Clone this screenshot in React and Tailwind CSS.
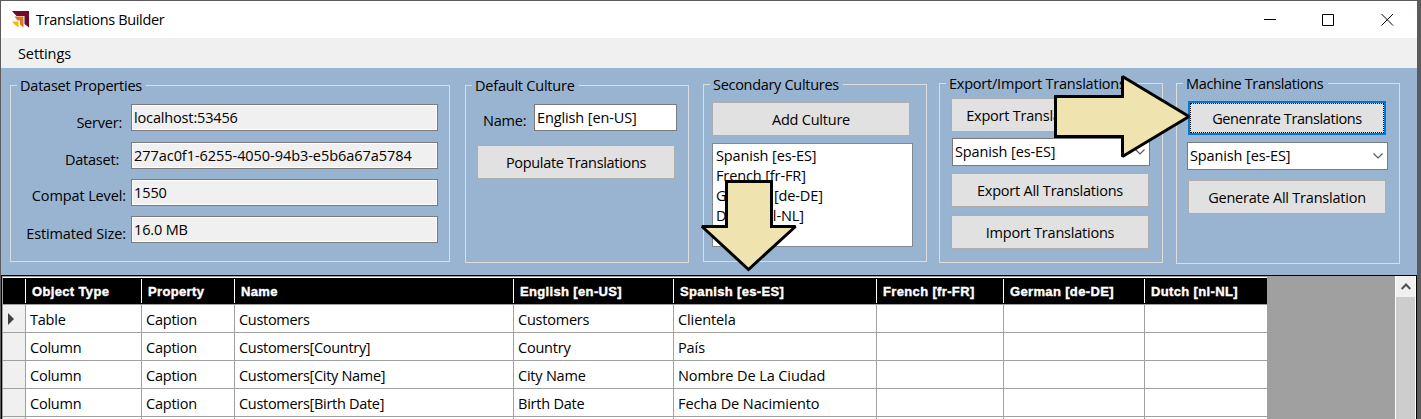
import React from 'react';

function Group({ title, box, gap, children }) {
  return (
    <section className={`relative shrink-0 border border-[#dcdcdc] ${box}`}>
      <h2 className={`absolute left-[6px] -top-[12px] h-[24px] bg-[#99b4d1] pl-[3px] leading-[24px] whitespace-nowrap ${gap}`}>{title}</h2>
      {children}
    </section>
  );
}

function Btn({ children, className = '' }) {
  return (
    <button className={`block h-[34px] w-[198px] shrink-0 border border-[#adadad] bg-[#e1e1e1] text-center leading-[33px] whitespace-nowrap ${className}`}>
      {children}
    </button>
  );
}

function Field({ label, value, pad, tracking = '' }) {
  return (
    <div className="flex h-[27px]">
      <label className={`w-[120px] shrink-0 text-right leading-[24px] whitespace-nowrap ${pad}`}>{label}</label>
      <div className={`w-[307px] border border-[#7a7a7a] bg-[#f0f0f0] pl-[2px] leading-[25px] whitespace-nowrap shadow-[inset_0_0_0_1px_#ffffff] ${tracking}`}>{value}</div>
    </div>
  );
}

function Select({ className }) {
  return (
    <div className={`flex h-[28px] items-center justify-between border border-[#7a7a7a] bg-white pr-[4px] pl-[2px] leading-[26px] ${className}`}>
      <span>Spanish [es-ES]</span>
      <svg width="10" height="6" viewBox="0 0 10 6" fill="none" stroke="#555" strokeWidth="1.1"><path d="M0.5 0.5 5 5 9.5 0.5" /></svg>
    </div>
  );
}

const widths = ['w-[116px]', 'w-[93px]', 'w-[279px]', 'w-[160px]', 'w-[203px]', 'w-[127px]', 'w-[141px]', 'w-[123px]'];
const heads = ['Object Type', 'Property', 'Name', 'English [en-US]', 'Spanish [es-ES]', 'French [fr-FR]', 'German [de-DE]', 'Dutch [nl-NL]'];
const rows = [
  ['Table', 'Caption', 'Customers', 'Customers', 'Clientela', '', '', ''],
  ['Column', 'Caption', 'Customers[Country]', 'Country', 'País', '', '', ''],
  ['Column', 'Caption', 'Customers[City Name]', 'City Name', 'Nombre De La Ciudad', '', '', ''],
  ['Column', 'Caption', 'Customers[Birth Date]', 'Birth Date', 'Fecha De Nacimiento', '', '', ''],
  ['', '', '', '', '', '', '', ''],
];

export default function App() {
  return (
    <div className="relative h-[419px] w-[1421px] overflow-hidden bg-[#5c5a5c] pt-px pr-[4px] pl-px font-['Open_Sans','Noto_Sans',sans-serif] text-[14.5px] tracking-[-0.22px] text-black">
      <header className="flex h-[37px] items-center bg-white pl-[11px]">
        <svg width="17" height="17" viewBox="0 0 17 17">
          <path d="M0 0h17v16.5l-4.5-3.5V5H4.5z" fill="#6e0a2c" />
          <path d="M2.5 5.5H11.5v11L8 13.500V9.500H5.500z" fill="#d8762a" />
          <path d="M0 10.500h6.500v6L4 14.500 2 13z" fill="#f8b800" />
        </svg>
        <h1 className="pl-[7px] tracking-[-0.34px]">Translations Builder</h1>
        <svg className="ml-auto mr-[22px]" width="131" height="14" viewBox="0 0 131 14" fill="none" stroke="#000" strokeWidth="1">
          <path d="M0 6.500h12M58.500 1.500h11v11h-11zM117.500 1l11.500 11.500M129 1l-11.500 11.500" />
        </svg>
      </header>
      <nav className="h-[30px] bg-[#f0f0f0] pl-[17px] leading-[31px] tracking-[-0.1px]">Settings</nav>

      <main className="flex h-[207px] items-start bg-[#99b4d1] pl-[9px]">
        <Group title="Dataset Properties" box="mt-[17px] h-[177px] w-[440px]" gap="w-[129px]">
          <div className="pt-[18px]">
            <Field label="Server:" value="localhost:53456" pad="pt-[7px] pr-[9px]" tracking="tracking-[-0.15px]" />
            <div className="h-[11px]" />
            <Field label="Dataset:" value="277ac0f1-6255-4050-94b3-e5b6a67a5784" pad="pt-[6px] pr-[12px]" tracking="tracking-[-0.05px]" />
            <div className="h-[10px]" />
            <Field label="Compat Level:" value="1550" pad="pt-[5px] pr-[5px] tracking-[-0.12px]" tracking="tracking-[-0.1px]" />
            <div className="h-[10px]" />
            <Field label="Estimated Size:" value="16.0 MB" pad="pt-[6px] pr-[5px] tracking-[-0.12px]" tracking="tracking-[-0.15px]" />
          </div>
        </Group>

        <Group title="Default Culture" box="mt-[17px] ml-[15px] h-[178px] w-[224px]" gap="w-[107px]">
          <div className="flex h-[27px] mt-[18px] pl-[17px]">
            <label className="w-[51px] pt-[5px] leading-[24px]">Name:</label>
            <div className="h-[27px] w-[143px] border border-[#7a7a7a] bg-white pl-[2px] leading-[25px] tracking-[-0.12px]">English [en-US]</div>
          </div>
          <Btn className="mt-[14px] ml-[11px] tracking-[-0.32px]">Populate Translations</Btn>
        </Group>

        <Group title="Secondary Cultures" box="mt-[16px] ml-[14px] h-[178px] w-[224px]" gap="w-[133px] tracking-[-0.3px]">
          <Btn className="mt-[17px] ml-[8px]">Add Culture</Btn>
          <ul className="mt-[7px] ml-[8px] h-[104px] w-[201px] border border-[#828790] bg-white pt-[2px] pl-[3px] leading-[20px] tracking-[-0.12px]">
            <li>Spanish [es-ES]</li>
            <li>French [fr-FR]</li>
            <li>German [de-DE]</li>
            <li>Dutch [nl-NL]</li>
          </ul>
        </Group>

        <Group title="Export/Import Translations" box="mt-[15px] ml-[12px] h-[180px] w-[224px]" gap="w-[184px]">
          <Btn className="mt-[14px] ml-[11px]">Export Translations Sheet</Btn>
          <Select className="mt-[6px] ml-[12px] w-[198px] tracking-[-0.12px]" />
          <Btn className="mt-[7px] ml-[11px]">Export All Translations</Btn>
          <Btn className="mt-[8px] ml-[11px]">Import Translations</Btn>
        </Group>

        <Group title="Machine Translations" box="mt-[15px] ml-[13px] h-[181px] w-[224px]" gap="w-[145px] tracking-[-0.34px]">
          <button className="mt-[17px] ml-[11px] block h-[34px] w-[198px] border-2 border-[#0078d7] bg-[#e1e1e1] text-center">
            <span className="block h-[30px] border border-dotted border-black leading-[30px] tracking-[-0.4px]">Genenrate Translations</span>
          </button>
          <Select className="mt-[7px] ml-[10px] w-[201px] tracking-[-0.12px]" />
          <Btn className="mt-[10px] ml-[11px]">Generate All Translation</Btn>
        </Group>
      </main>

      <div className="flex h-[144px] border-t border-r border-l border-black bg-[#a0a0a0]">
        <div className="w-[1265px] border-l border-[#a0a0a0]">
          <div className="mt-px flex h-[27px] border-t border-white bg-black font-['Liberation_Sans',Arial,sans-serif] text-[13px] font-bold tracking-[0.35px] text-white [-webkit-text-stroke:0.4px_white]">
            <div className="w-[22px] shrink-0" />
            {heads.map((h, i) => (
              <div key={h} className={`my-px shrink-0 border-l border-white pl-[6px] leading-[25px] whitespace-nowrap ${widths[i]}`}>{h}</div>
            ))}
          </div>
          {rows.map((r, i) => (
            <div key={i} className="flex h-[28px] border-t border-[#a0a0a0] bg-white">
              <div className="flex w-[22px] shrink-0 items-center bg-[#f0f0f0] pl-[5px]">
                {i === 0 && <svg width="6" height="12" viewBox="0 0 6 12"><path d="M0 0 6 6 0 12z" fill="#404040" /></svg>}
              </div>
              {r.map((c, j) => (
                <div key={j} className={`shrink-0 border-l border-[#a0a0a0] pl-[4px] leading-[29px] whitespace-nowrap ${widths[j]} ${j === 4 ? 'tracking-[-0.1px]' : j === 2 ? 'tracking-[-0.3px]' : ''}`}>{c}</div>
              ))}
            </div>
          ))}
        </div>
        <div className="ml-auto w-[21px] border-r border-l border-white bg-[#cdcdcd]">
          <div className="flex h-[21px] items-center justify-center bg-[#f0f0f0]">
            <svg width="10" height="7" viewBox="0 0 10 7" fill="none" stroke="#505050" strokeWidth="2"><path d="M0.7 6 5 1.5 9.3 6" /></svg>
          </div>
        </div>
      </div>

      <svg className="pointer-events-none absolute top-0 left-0" width="1421" height="419" viewBox="0 0 1421 419" fill="#efe4b0" stroke="#000" strokeWidth="3" strokeMiterlimit="1.5">
        <path d="M726.5 181.5H771.5V226.5H795.5L748.5 269.5 702 226.5H726.5z" />
        <path d="M1055.5 96.5H1122.5V76.5L1189 116.5 1122.5 156.5V136.5H1055.5z" />
      </svg>
    </div>
  );
}
